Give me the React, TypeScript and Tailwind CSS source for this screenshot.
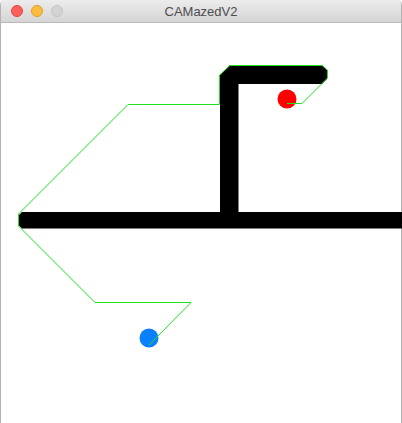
import React from "react"

const pathPoints = [
  [149, 345],
  [191, 302.5],
  [95, 302.5],
  [18.5, 226],
  [18.5, 214],
  [128, 104.5],
  [219.5, 104.5],
  [219.5, 75],
  [230, 65.5],
  [322, 65.5],
  [327.5, 70],
  [327.5, 78],
  [302, 103.5],
  [287, 103.5],
]

function TitleBar() {
  return (
    <div className="grid h-[23px] grid-cols-[1fr_auto_1fr] items-center rounded-t-[5px] border-b border-[#b9b9b9] bg-gradient-to-b from-[#ececec] to-[#d5d5d5]">
      <div className="flex items-center gap-[8px] pl-[10px]">
        <span className="h-[12px] w-[12px] rounded-full border border-[#e2463f] bg-[#fc605c]" />
        <span className="h-[12px] w-[12px] rounded-full border border-[#dfa023] bg-[#fdbc40]" />
        <span className="h-[12px] w-[12px] rounded-full border border-[#c4c4c4] bg-[#d3d3d3]" />
      </div>
      <span className="text-[13px] leading-none text-[#4d4d4d] [font-family:'Liberation_Sans',Arial,sans-serif]">
        CAMazedV2
      </span>
      <div />
    </div>
  )
}

function Maze() {
  return (
    <svg width={401} height={400} viewBox="1 23 401 400" className="block">
      {/* walls */}
      <polygon points="22,212 402,212 402,228.5 22,228.5 18,224.5 18,216" fill="#000" />
      <polygon points="220,75 230,65 322,65 327,70 327,79 322,84 238.5,84 238.5,213 220,213" fill="#000" />
      {/* agents */}
      <circle cx={287} cy={99} r={9.5} fill="#fe0000" />
      <circle cx={149} cy={338} r={9.5} fill="#0a80ff" />
      {/* path */}
      <polyline
        points={pathPoints.map((p) => p.join(",")).join(" ")}
        fill="none"
        stroke="#1fe01f"
        strokeWidth={1}
      />
    </svg>
  )
}

export default function App() {
  return (
    <div className="h-[423px] w-[402px] overflow-hidden bg-white">
      <div className="flex h-full flex-col rounded-t-[5px] border-x border-[#b3b3b3]">
        <TitleBar />
        <div className="flex-1 bg-white">
          <Maze />
        </div>
      </div>
    </div>
  )
}
